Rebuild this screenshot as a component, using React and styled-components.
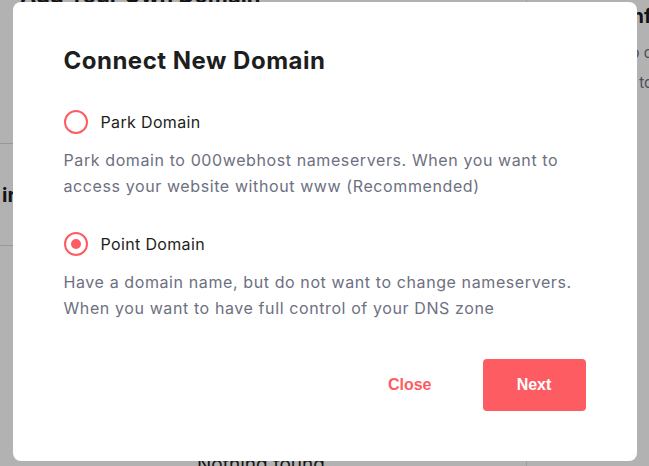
import React, { useState } from 'react';
import styled, { createGlobalStyle } from 'styled-components';

const GlobalStyle = createGlobalStyle`
  html, body {
    margin: 0;
    padding: 0;
    background: #ffffff;
    overflow: hidden;
  }
  body {
    font-family: Inter, "Noto Sans", sans-serif;
    color: #1d1e20;
  }
`;

const Page = styled.div`
  width: 649px;
  height: 466px;
  display: grid;
  grid-template-columns: 1fr 123px;
  gap: 24px;
  padding: 0 0 0 20px;
  box-sizing: border-box;
`;

const Main = styled.div`
  display: flex;
  flex-direction: column;
  min-width: 0;
`;

const PageTitle = styled.h1`
  margin: -18px 0 0;
  font-size: 22px;
  font-weight: 700;
  line-height: 26px;
  white-space: nowrap;
`;

const TableHead = styled.div`
  margin: 135px -20px 0;
  height: 101px;
  display: flex;
  align-items: center;
  padding: 0 0 0 2px;
  border-top: 1px solid #d8dae0;
  border-bottom: 1px solid #d8dae0;
  font-size: 20px;
  font-weight: 700;
`;

const Empty = styled.div`
  margin-top: 207px;
  text-align: center;
  font-size: 19px;
  line-height: 24px;
`;

const Side = styled.div`
  display: flex;
  flex-direction: column;
  gap: 10px;
  padding-top: 4px;
  border-left: 1px solid #e3e4e8;
  padding-left: 20px;
  overflow: hidden;
`;

const SideTitle = styled.div`
  font-size: 20px;
  font-weight: 700;
  white-space: nowrap;
`;

const SideText = styled.div`
  font-size: 15px;
  line-height: 30px;
  color: #6d7081;
  white-space: nowrap;
`;

const Overlay = styled.div`
  position: fixed;
  inset: 0;
  background: rgba(0, 0, 0, 0.3);
  display: flex;
  justify-content: center;
  align-items: flex-start;
  padding-top: 2px;
`;

const Modal = styled.div`
  width: 624px;
  height: 459px;
  box-sizing: border-box;
  background: #ffffff;
  border-radius: 8px;
  padding: 44px 51px 50px;
  display: flex;
  flex-direction: column;
`;

const Title = styled.h2`
  margin: 0 0 33px;
  font-size: 24px;
  font-weight: 700;
  letter-spacing: 0.5px;
  line-height: 30px;
  color: #1d1e20;
`;

const Options = styled.div`
  display: flex;
  flex-direction: column;
  gap: 32px;
`;

const Option = styled.label`
  display: flex;
  flex-direction: column;
  gap: 12px;
  cursor: pointer;
`;

const OptionRow = styled.div`
  display: flex;
  align-items: center;
  gap: 13px;
  height: 26px;
`;

const Radio = styled.span`
  width: 24px;
  height: 24px;
  box-sizing: border-box;
  border-radius: 50%;
  border: 2px solid #fe5c63;
  display: flex;
  align-items: center;
  justify-content: center;

  &::after {
    content: '';
    width: 10px;
    height: 10px;
    border-radius: 50%;
    background: #fe5c63;
    display: ${(p) => (p.$checked ? 'block' : 'none')};
  }
`;

const OptionLabel = styled.span`
  font-size: 16px;
  letter-spacing: 0.35px;
  color: #1d1e20;
`;

const OptionText = styled.p`
  margin: 0;
  max-width: 515px;
  font-size: 16px;
  letter-spacing: 0.6px;
  line-height: 26px;
  color: #6d7081;
`;

const Footer = styled.div`
  margin-top: auto;
  display: flex;
  justify-content: flex-end;
  align-items: center;
  gap: 51px;
`;

const Button = styled.button`
  font-family: "Liberation Sans", Arial, sans-serif;
  font-size: 16px;
  font-weight: 700;
  border: none;
  border-radius: 4px;
  cursor: pointer;
  height: 52px;
  padding: 0 ${(p) => (p.$primary ? '32px' : '0')};
  min-width: ${(p) => (p.$primary ? '103px' : '0')};
  background: ${(p) => (p.$primary ? '#fe5c63' : 'transparent')};
  color: ${(p) => (p.$primary ? '#ffffff' : '#fe5c63')};
`;

const options = [
  {
    id: 'park',
    label: 'Park Domain',
    text: 'Park domain to 000webhost nameservers. When you want to access your website without www (Recommended)',
  },
  {
    id: 'point',
    label: 'Point Domain',
    text: 'Have a domain name, but do not want to change nameservers. When you want to have full control of your DNS zone',
  },
];

const App = () => {
  const [selected, setSelected] = useState('point');

  return (
    <>
      <GlobalStyle />
      <Page>
        <Main>
          <PageTitle>Add Your Own Domain</PageTitle>
          <TableHead>ir Domain</TableHead>
          <Empty>Nothing found</Empty>
        </Main>
        <Side>
          <SideTitle>Domain information</SideTitle>
          <SideText>
            Learn how to connect
            <br />
            your domain to the server
          </SideText>
        </Side>
      </Page>
      <Overlay>
        <Modal role="dialog">
          <Title>Connect New Domain</Title>
          <Options>
            {options.map((o) => (
              <Option key={o.id} onClick={() => setSelected(o.id)}>
                <OptionRow>
                  <Radio $checked={selected === o.id} />
                  <OptionLabel>{o.label}</OptionLabel>
                </OptionRow>
                <OptionText>{o.text}</OptionText>
              </Option>
            ))}
          </Options>
          <Footer>
            <Button>Close</Button>
            <Button $primary>Next</Button>
          </Footer>
        </Modal>
      </Overlay>
    </>
  );
};

export default App;
